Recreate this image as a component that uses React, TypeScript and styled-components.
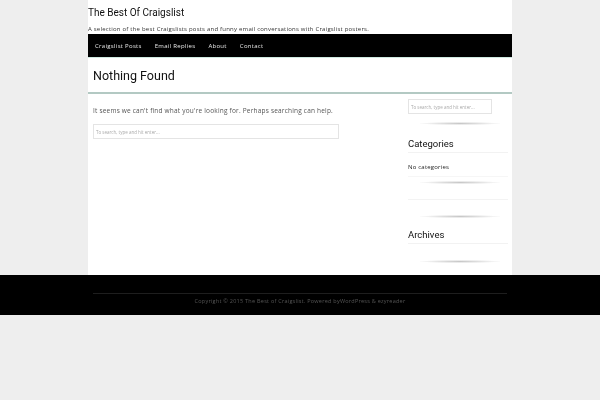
import React from "react";
import styled, { createGlobalStyle } from "styled-components";

const Global = createGlobalStyle`
  html, body { margin: 0; padding: 0; background: #eeeeee; }
  body { font-family: "Open Sans", "Liberation Sans", sans-serif; }
  #root { will-change: transform; }
  * { box-sizing: border-box; }
`;

const Page = styled.div`
  width: 424px;
  margin: 0 auto;
  background: #ffffff;
`;

const Header = styled.header`
  padding: 6px 0 0 0;
`;

const SiteTitle = styled.h1`
  margin: 0;
  font-family: Roboto, "Liberation Sans", sans-serif;
  font-weight: 400;
  font-size: 10px;
  line-height: 14px;
  color: #111;
`;

const Tagline = styled.p`
  margin: 5px 0 0 0;
  font-size: 6px;
  line-height: 9px;
  letter-spacing: 0.22px;
  color: #333;
  white-space: nowrap;
`;

const Nav = styled.nav`
  height: 23px;
  background: #000;
  display: flex;
  align-items: center;
  padding-left: 7px;
  gap: 13px;
  border-bottom: 1px solid #cfe9e1;
  box-sizing: content-box;
`;

const NavItem = styled.a`
  color: #e8e8e8;
  font-size: 6px;
  letter-spacing: 0.3px;
  text-decoration: none;
`;

const TitleBar = styled.div`
  height: 36px;
  display: flex;
  align-items: center;
  padding-left: 5px;
  border-bottom: 2px solid #b3c9c3;
`;

const PageTitle = styled.h2`
  margin: 0;
  font-family: Roboto, "Liberation Sans", sans-serif;
  font-weight: 400;
  font-size: 12.5px;
  color: #111;
`;

const Body = styled.div`
  display: flex;
  justify-content: space-between;
  padding: 0 4px 0 5px;
  height: 181px;
`;

const Main = styled.main`
  width: 246px;
  padding-top: 12px;
`;

const Message = styled.p`
  margin: 0;
  font-size: 6.5px;
  line-height: 10px;
  letter-spacing: 0.2px;
  color: #555;
  white-space: nowrap;
`;

const SearchBox = styled.div<{ $w: number }>`
  width: ${(p) => p.$w}px;
  height: 15px;
  border: 1px solid #e4e4e4;
  display: flex;
  align-items: center;
  padding-left: 2px;
  font-size: 4.5px;
  color: #aaa;
  white-space: nowrap;
`;

const Sidebar = styled.aside`
  width: 100px;
  padding-top: 5px;
  display: flex;
  flex-direction: column;
`;

const Shadow = styled.div`
  height: 3px;
  margin: 0 8px 0 12px;
  background: radial-gradient(ellipse at center, rgba(0,0,0,0.22) 0%, rgba(0,0,0,0.06) 55%, rgba(0,0,0,0) 75%);
`;

const WidgetTitle = styled.h3`
  margin: 0;
  font-family: Roboto, "Liberation Sans", sans-serif;
  font-weight: 400;
  font-size: 9.5px;
  line-height: 12px;
  color: #111;
  padding-bottom: 2px;
  border-bottom: 1px solid #f2f2f2;
`;

const WidgetText = styled.p`
  margin: 0;
  font-size: 6px;
  line-height: 8px;
  letter-spacing: 0.2px;
  color: #222;
  padding: 10px 0 5px 0;
  border-bottom: 1px solid #f6f6f6;
`;

const Spacer = styled.div<{ $h: number }>`
  height: ${(p) => p.$h}px;
  flex-shrink: 0;
`;

const Line = styled.div`
  height: 1px;
  background: #f3f3f3;
`;

const Footer = styled.footer`
  background: #000;
  height: 40px;
  display: flex;
  flex-direction: column;
`;

const FooterInner = styled.div`
  width: 414px;
  margin: 0 auto;
  padding-top: 18px;
`;

const FooterRule = styled.div`
  height: 1px;
  background: #1e1e1e;
`;

const Copyright = styled.p`
  margin: 0;
  text-align: center;
  font-size: 5.5px;
  letter-spacing: 0.25px;
  line-height: 14px;
  color: #555;
  white-space: nowrap;
`;

export default function App() {
  return (
    <>
      <Global />
      <Page>
        <Header>
          <SiteTitle>The Best Of Craigslist</SiteTitle>
          <Tagline>
            A selection of the best Craigslists posts and funny email conversations with Craigslist posters.
          </Tagline>
        </Header>
        <Nav>
          <NavItem>Craigslist Posts</NavItem>
          <NavItem>Email Replies</NavItem>
          <NavItem>About</NavItem>
          <NavItem>Contact</NavItem>
        </Nav>
        <TitleBar>
          <PageTitle>Nothing Found</PageTitle>
        </TitleBar>
        <Body>
          <Main>
            <Message>It seems we can't find what you're looking for. Perhaps searching can help.</Message>
            <Spacer $h={8} />
            <SearchBox $w={246}>To search, type and hit enter...</SearchBox>
          </Main>
          <Sidebar>
            <SearchBox $w={84}>To search, type and hit enter...</SearchBox>
            <Spacer $h={8} />
            <Shadow />
            <Spacer $h={13} />
            <WidgetTitle>Categories</WidgetTitle>
            <WidgetText>No categories</WidgetText>
            <Spacer $h={4} />
            <Shadow />
            <Spacer $h={15} />
            <Line />
            <Spacer $h={15} />
            <Shadow />
            <Spacer $h={11} />
            <WidgetTitle>Archives</WidgetTitle>
            <Spacer $h={16} />
            <Shadow />
          </Sidebar>
        </Body>
      </Page>
      <Footer>
        <FooterInner>
          <FooterRule />
          <Copyright>Copyright © 2015 The Best of Craigslist. Powered byWordPress &amp; ezyreader</Copyright>
        </FooterInner>
      </Footer>
    </>
  );
}
